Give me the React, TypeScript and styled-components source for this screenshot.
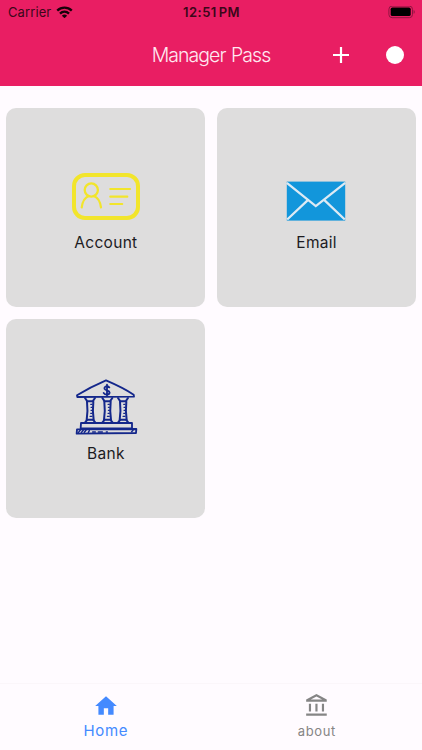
import React from "react";
import styled, { createGlobalStyle } from "styled-components";

const GlobalStyle = createGlobalStyle`
  * { box-sizing: border-box; }
  body { margin: 0; background: #fffbff; font-family: Inter, "Liberation Sans", sans-serif; }
`;

const Screen = styled.div`
  display: flex;
  flex-direction: column;
  width: 100%;
  height: 750px;
  overflow: hidden;
  background: #fffbff;
`;

const Header = styled.header`
  height: 85.5px;
  flex: none;
  background: #e91e63;
`;

const StatusBar = styled.div`
  display: grid;
  grid-template-columns: 1fr auto 1fr;
  align-items: center;
  height: 24px;
  padding: 0 7px 0 8px;
  color: #3b0719;
`;

const Carrier = styled.div`
  display: flex;
  align-items: center;
  gap: 4.5px;
  font-size: 13px;
  line-height: 24px;
  letter-spacing: 0.1px;
`;

const Clock = styled.div`
  font-size: 13px;
  font-weight: 600;
  line-height: 24px;
  letter-spacing: 0.5px;
  word-spacing: -2px;
`;

const BatterySlot = styled.div`
  display: flex;
  justify-content: flex-end;
`;

const AppBar = styled.div`
  display: grid;
  grid-template-columns: 1fr auto 1fr;
  align-items: center;
  height: 61px;
  padding: 0 18px;
`;

const Title = styled.h1`
  grid-column: 2;
  margin: 0;
  color: #ffe9f1;
  font-size: 19.5px;
  font-weight: 300;
  line-height: 28px;
  letter-spacing: -0.95px;
  word-spacing: 1px;
`;

const Actions = styled.div`
  display: flex;
  align-items: center;
  justify-content: flex-end;
  gap: 37px;
`;

const Grid = styled.main`
  display: grid;
  grid-template-columns: 1fr 1fr;
  grid-auto-rows: 199.3px;
  align-content: start;
  gap: 11.5px;
  flex: 1;
  padding: 22.5px 6px 0;
`;

const Card = styled.button`
  display: flex;
  flex-direction: column;
  align-items: center;
  padding: 59px 0 0;
  border: 0;
  border-radius: 10px;
  background: #dedddd;
  color: #1c1b1f;
  font-family: inherit;
`;

const Picture = styled.span<{ $top: number; $left?: number }>`
  display: flex;
  align-items: flex-start;
  height: 64px;
  padding-top: ${(p) => p.$top}px;
  padding-left: ${(p) => p.$left ?? 0}px;
`;

const CardLabel = styled.span`
  padding-left: 0.5px;
  font-size: 15.5px;
  line-height: 24px;
  letter-spacing: 0.3px;
`;

const TabBar = styled.nav`
  display: grid;
  grid-template-columns: 1fr 1fr;
  flex: none;
  height: 67px;
  border-top: 1px solid #fbf6fa;
`;

const Tab = styled.a<{ $active?: boolean }>`
  display: flex;
  flex-direction: column;
  align-items: center;
  padding-top: 9px;
  color: ${(p) => (p.$active ? "#448aff" : "#858585")};
`;

const TabLabel = styled.span<{ $size: number }>`
  margin-top: 2px;
  padding-left: 0.6px;
  font-size: ${(p) => p.$size}px;
  line-height: 20px;
  letter-spacing: 0.6px;
`;

const WifiIcon = () => (
  <svg width="17" height="12.5" viewBox="0 0 18 13" fill="none" stroke="#18020a" strokeWidth="2.5">
    <path d="M1.3 4.8C5.7 .6 12.3 .6 16.7 4.8" />
    <path d="M4.2 8C7 5.3 11 5.3 13.8 8" />
    <path d="M9 12.8 6.2 10.2C7.9 8.6 10.1 8.6 11.8 10.2Z" fill="#18020a" stroke="none" />
  </svg>
);

const BatteryIcon = () => (
  <svg width="27" height="13" viewBox="0 0 27 13">
    <rect x=".9" y=".1" width="23.6" height="11.6" rx="3.2" fill="none" stroke="#8f1540" />
    <rect x="2.7" y="1.6" width="20" height="8.5" rx="1.7" fill="#000" />
    <path d="M25.6 4v3.8c1.5-.6 1.5-3.2 0-3.8Z" fill="#8f1540" />
  </svg>
);

const PlusIcon = () => (
  <svg width="16" height="16" viewBox="0 0 16 16">
    <path d="M8 0v16M0 8h16" stroke="#fff" strokeWidth="2.2" />
  </svg>
);

const DotIcon = () => (
  <svg width="18" height="18" viewBox="0 0 18 18">
    <circle cx="9" cy="9" r="9" fill="#fff" />
  </svg>
);

const IdCardIcon = () => (
  <svg width="68" height="47" viewBox="0 0 68 47" fill="none" stroke="#f2e52b" strokeLinecap="round">
    <rect x="2" y="2" width="64" height="43" rx="11" strokeWidth="4" />
    <circle cx="19.3" cy="17" r="6.6" strokeWidth="2.3" />
    <path d="M9.7 34.5C10.5 28.5 13.2 24.3 16.7 23M21.9 23C25.4 24.3 28.2 28.5 29 34.5" strokeWidth="2.2" />
    <path d="M38.3 16H58M38.3 23.7H55.3M38.3 31H50.2" strokeWidth="2.2" />
  </svg>
);

const EnvelopeIcon = () => (
  <svg width="60" height="40" viewBox="0 0 60 40">
    <rect x=".8" y=".6" width="58.4" height="39" fill="#1296db" />
    <path d="M.8 1.8 29.8 25.1 59.2 1.8M1.2 38.5 22.1 18.9M58.8 38.5 38.1 18.9" fill="none" stroke="#dceaf4" strokeWidth="2.3" />
  </svg>
);

const columns = [75, 127, 174];

const BankDrawing = () => (
  <svg width="64" height="58" viewBox="30 24 192 174" fill="none" stroke="#14278b" strokeWidth="5.5" strokeLinecap="round" strokeLinejoin="round">
    <path d="M36 76C60 61 90 45 123 31C151 43 181 57 206 74L207 80L37 81Z" />
    <path d="M133 52C125 45 116 51 119 57C121 62 134 61 134 68C133 75 121 76 116 69M126 44V78" />
    {columns.map((x) => (
      <g key={x}>
        <path d={`M${x - 15} 84L${x - 8} 94H${x + 8}L${x + 15} 84`} strokeWidth="6" />
        <path d={`M${x - 9} 95C${x - 7} 113 ${x - 7} 132 ${x - 10} 150M${x + 10} 95C${x + 8} 114 ${x + 8} 132 ${x + 11} 150`} strokeWidth="6" />
        <path d={`M${x - 15} 158L${x - 8} 149H${x + 9}L${x + 16} 158`} strokeWidth="6" />
        <path d={`M${x + 2} 103H${x + 6}M${x + 3} 112H${x + 6}M${x + 3} 121H${x + 6}M${x + 2} 130H${x + 6}M${x} 139H${x + 6}`} strokeWidth="3.5" />
      </g>
    ))}
    <path d="M48 159H201V175H47Z" />
    <path d="M36 178L214 177L213 189L35 191Z" />
    <path d="M40 188L46 180M49 188L55 180M58 187L63 181M70 187L73 182M83 186H91M100 186H112M124 186H127M200 185L204 181" strokeWidth="4.5" />
  </svg>
);

const HomeIcon = () => (
  <svg width="26" height="26" viewBox="0 0 24 24" fill="currentColor">
    <path d="M10 20v-6h4v6h5v-8h3L12 3 2 12h3v8z" />
  </svg>
);

const InstitutionIcon = () => (
  <svg width="26" height="26" viewBox="0 0 24 24" fill="currentColor">
    <path d="M6.5 10h-2v7h2v-7zm6 0h-2v7h2v-7zm8.5 9H2v2h19v-2zm-2.5-9h-2v7h2v-7zm-7-6.74L16.71 6H6.29l5.21-2.74m0-2.26L2 6v2h19V6l-9.5-5z" />
  </svg>
);

export default function App() {
  return (
    <>
      <GlobalStyle />
      <Screen>
        <Header>
          <StatusBar>
            <Carrier>Carrier <WifiIcon /></Carrier>
            <Clock>12:51 PM</Clock>
            <BatterySlot><BatteryIcon /></BatterySlot>
          </StatusBar>
          <AppBar>
            <Title>Manager Pass</Title>
            <Actions><PlusIcon /><DotIcon /></Actions>
          </AppBar>
        </Header>
        <Grid>
          <Card><Picture $top={6}><IdCardIcon /></Picture><CardLabel>Account</CardLabel></Card>
          <Card><Picture $top={14}><EnvelopeIcon /></Picture><CardLabel>Email</CardLabel></Card>
          <Card><Picture $top={0} $left={2.6}><BankDrawing /></Picture><CardLabel>Bank</CardLabel></Card>
        </Grid>
        <TabBar>
          <Tab $active><HomeIcon /><TabLabel $size={15}>Home</TabLabel></Tab>
          <Tab><InstitutionIcon /><TabLabel $size={13}>about</TabLabel></Tab>
        </TabBar>
      </Screen>
    </>
  );
}
